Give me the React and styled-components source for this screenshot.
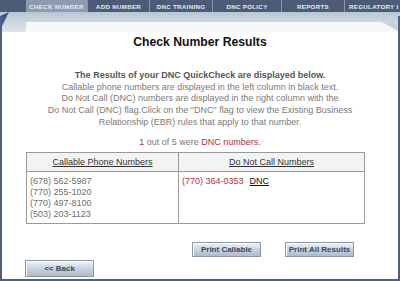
import React from 'react';
import styled, { createGlobalStyle } from 'styled-components';

const GlobalStyle = createGlobalStyle`
  html, body {
    margin: 0;
    padding: 0;
    background: #ffffff;
  }
`;

const Page = styled.div`
  width: 400px;
  height: 281px;
  display: flex;
  flex-direction: column;
  font-family: "Liberation Sans", Arial, sans-serif;
  overflow: hidden;
  background: #ffffff;
`;

const NavBar = styled.div`
  display: flex;
  height: 12px;
  background: #4c5b76;
  flex-shrink: 0;
`;

const NavLead = styled.div`
  width: 26px;
  flex-shrink: 0;
`;

const Tab = styled.div`
  width: ${p => p.w}px;
  flex-shrink: 0;
  display: flex;
  align-items: center;
  justify-content: ${p => (p.clip ? 'flex-start' : 'center')};
  padding-left: ${p => (p.clip ? 4 : 0)}px;
  font-size: 6.2px;
  font-weight: 700;
  letter-spacing: 0.3px;
  white-space: nowrap;
  overflow: hidden;
  color: #e6eaf0;
  background: ${p => (p.active ? '#8c9bb0' : 'transparent')};
  border-right: 1px solid #8796ab;
  box-sizing: border-box;
`;

const Header = styled.svg`
  display: block;
  flex-shrink: 0;
`;

const Panel = styled.div`
  flex: 1;
  display: flex;
  flex-direction: column;
  align-items: center;
  border-left: 2px solid #4f6080;
  border-right: 2px solid #4f6080;
  border-bottom: 2px solid #4f6080;
  margin-top: -16px;
`;

const Title = styled.h1`
  margin: 19px 0 0;
  font-size: 12.2px;
  font-weight: 700;
  color: #111;
  line-height: 14px;
`;

const Intro = styled.div`
  margin-top: 21px;
  text-align: center;
  font-size: 9px;
  line-height: 11.7px;
  color: #7a7a7a;
`;

const IntroLead = styled.div`
  font-weight: 700;
  color: #555;
`;

const Summary = styled.div`
  margin-top: 8px;
  font-size: 9px;
  line-height: 11px;
  color: #777;
`;

const Red = styled.span`
  color: #b0303c;
`;

const Table = styled.div`
  margin: 4px 9px 0 0;
  width: 339px;
  display: grid;
  grid-template-columns: 152px 1fr;
  border: 1px solid #9a9a9a;
  box-sizing: border-box;
`;

const HeadCell = styled.div`
  height: 18px;
  display: flex;
  align-items: center;
  justify-content: center;
  background: #f3f3f3;
  border-bottom: 1px solid #9a9a9a;
  border-right: ${p => (p.first ? '1px solid #9a9a9a' : 'none')};
  font-size: 9px;
  color: #333;
  text-decoration: underline;
`;

const BodyCell = styled.div`
  height: 51px;
  padding: 4px 3px 0;
  box-sizing: border-box;
  border-right: ${p => (p.first ? '1px solid #9a9a9a' : 'none')};
  font-size: 9px;
  line-height: 11px;
  color: #6e6e6e;
`;

const DncRow = styled.div`
  display: flex;
  gap: 6px;
  color: #b0303c;
`;

const Flag = styled.span`
  color: #111;
  text-decoration: underline;
`;

const ActionRow = styled.div`
  align-self: stretch;
  display: flex;
  justify-content: flex-end;
  gap: 24px;
  padding-right: 44px;
  margin-top: 18px;
`;

const BackRow = styled.div`
  align-self: stretch;
  padding-left: 23px;
  margin-top: 0;
`;

const Button = styled.button`
  width: 69px;
  height: ${p => (p.tall ? 17 : 15)}px;
  padding: 0;
  border: 1px solid #8d97a4;
  background: linear-gradient(#eef2f6, #c3cedb 60%, #aebccb);
  font-family: "Liberation Sans", Arial, sans-serif;
  font-size: 8px;
  font-weight: 700;
  color: #3c4a60;
  box-shadow: inset 1px 1px 0 #ffffff;
`;

const calls = ['(678) 562-5987', '(770) 255-1020', '(770) 497-8100', '(503) 203-1123'];

const tabs = [
  { label: 'CHECK NUMBER', w: 62, active: true },
  { label: 'ADD NUMBER', w: 62 },
  { label: 'DNC TRAINING', w: 63 },
  { label: 'DNC POLICY', w: 69 },
  { label: 'REPORTS', w: 63 },
  { label: 'REGULATORY I', w: 70, clip: true }
];

const App = () => (
  <>
    <GlobalStyle />
    <Page>
      <NavBar>
        <NavLead />
        {tabs.map(t => (
          <Tab key={t.label} w={t.w} active={t.active} clip={t.clip}>
            {t.label}
          </Tab>
        ))}
      </NavBar>
      <Header width="400" height="20" viewBox="0 0 400 20">
        <defs>
          <linearGradient id="band" x1="0" y1="0" x2="0" y2="1">
            <stop offset="0" stopColor="#b9c6d4" />
            <stop offset="1" stopColor="#dfe5ec" />
          </linearGradient>
        </defs>
        <rect x="0" y="0" width="400" height="20" fill="#ffffff" />
        <polygon points="0,0 400,0 400,20 384,10 30,10 26,20 0,20" fill="url(#band)" />
        <polygon points="0,4 9,0 0,18" fill="#3f5884" />
        <polygon points="26,10 384,10 400,20 26,20" fill="#f6f7f9" />
        <polygon points="382,10 392,10 400,16 400,20" fill="#c9d2dc" />
      </Header>
      <Panel>
        <Title>Check Number Results</Title>
        <Intro>
          <IntroLead>The Results of your DNC QuickCheck are displayed below.</IntroLead>
          <div>Callable phone numbers are displayed in the left column in black text.</div>
          <div>Do Not Call (DNC) numbers are displayed in the right column with the</div>
          <div>Do Not Call (DNC) flag.Click on the "DNC" flag to view the Existing Business</div>
          <div>Relationship (EBR) rules that apply to that number.</div>
        </Intro>
        <Summary>
          <Red>1</Red> out of 5 were <Red>DNC numbers.</Red>
        </Summary>
        <Table>
          <HeadCell first>Callable Phone Numbers</HeadCell>
          <HeadCell>Do Not Call Numbers</HeadCell>
          <BodyCell first>
            {calls.map(n => (
              <div key={n}>{n}</div>
            ))}
          </BodyCell>
          <BodyCell>
            <DncRow>
              <span>(770) 364-0353</span>
              <Flag>DNC</Flag>
            </DncRow>
          </BodyCell>
        </Table>
        <ActionRow>
          <Button>Print Callable</Button>
          <Button>Print All Results</Button>
        </ActionRow>
        <BackRow>
          <Button tall>&lt;&lt; Back</Button>
        </BackRow>
      </Panel>
    </Page>
  </>
);

export default App;
